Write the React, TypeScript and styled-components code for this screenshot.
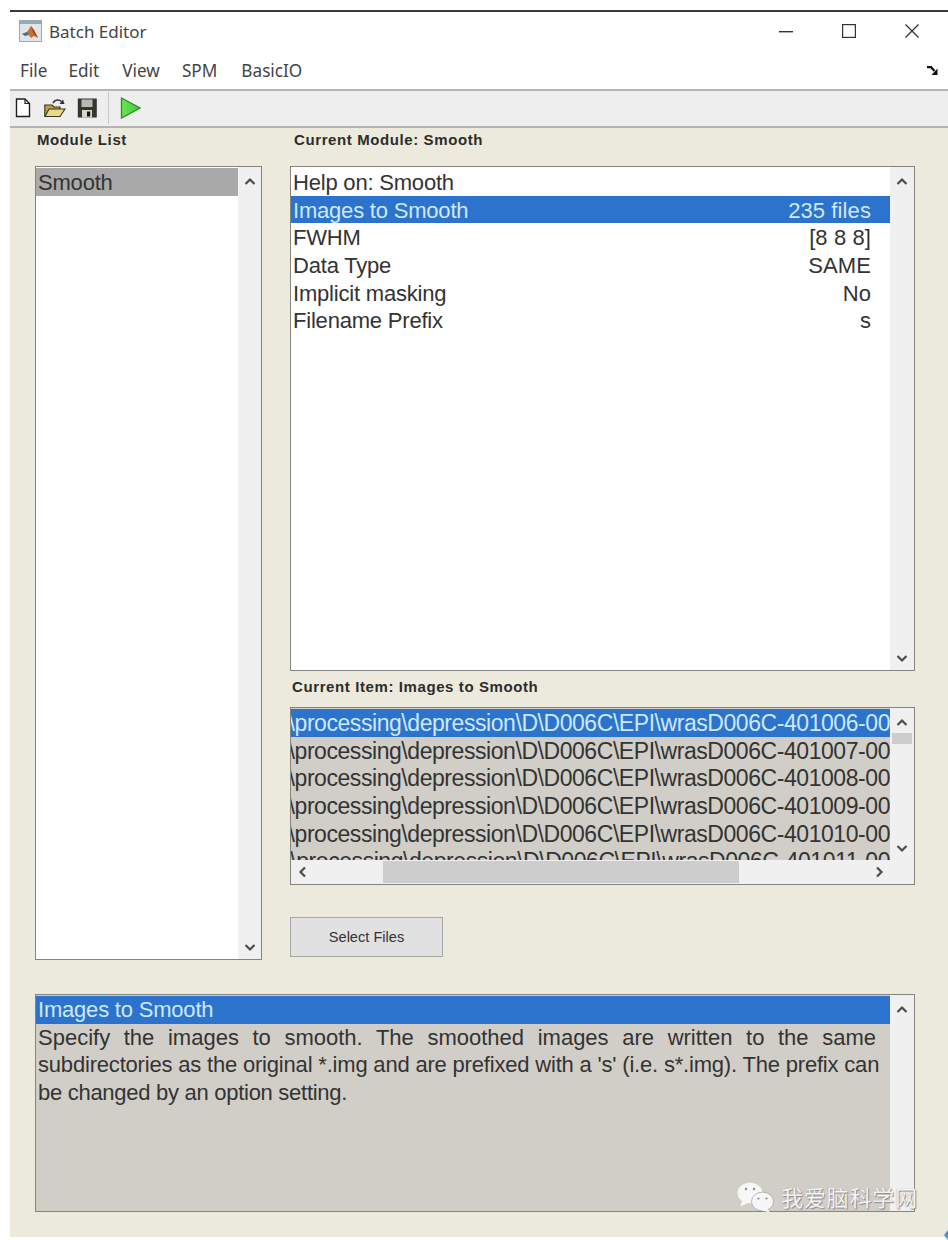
import React from 'react';
import styled, { createGlobalStyle } from 'styled-components';

const GlobalStyle = createGlobalStyle`
  html, body {
    margin: 0;
    padding: 0;
    background: #ffffff;
  }
  body {
    font-family: "Liberation Sans", Arial, sans-serif;
  }
  * {
    box-sizing: border-box;
  }
`;

const Page = styled.div`
  position: relative;
  width: 948px;
  height: 1240px;
  padding: 10px 0 3px 10px;
  overflow: hidden;
`;

const Window = styled.div`
  height: 100%;
  display: flex;
  flex-direction: column;
  border-top: 2px solid #3a3a3a;
  background: #ffffff;
`;

const TitleBar = styled.div`
  height: 38px;
  display: flex;
  align-items: center;
  flex: none;
  padding-left: 9px;
`;

const TitleText = styled.div`
  margin-left: 7px;
  font-family: "Noto Sans", sans-serif;
  font-size: 17px;
  color: #444444;
`;

const WindowButtons = styled.div`
  margin-left: auto;
  display: flex;
  align-items: center;
  gap: 49px;
  padding-right: 29px;
`;

const MenuBar = styled.div`
  height: 39px;
  flex: none;
  display: flex;
  align-items: center;
  padding: 1px 0 0 10px;
  gap: 22px;
`;

const MenuItem = styled.div<{ $nudge?: number }>`
  margin-left: ${p => p.$nudge ?? 0}px;
  font-family: "Noto Sans", sans-serif;
  font-size: 17.2px;
  color: #444444;
`;

const MenuArrow = styled.div`
  margin-left: auto;
  margin-right: 10px;
  display: flex;
  align-items: center;
`;

const ToolBar = styled.div`
  height: 39px;
  flex: none;
  display: flex;
  align-items: center;
  padding: 0 0 2px 5px;
  gap: 11px;
  background: #eeeeee;
  border-top: 2px solid #b4b4b4;
  border-bottom: 2px solid #b4b4b4;
`;

const ToolDivider = styled.div`
  width: 1px;
  height: 32px;
  background: #c8c8c8;
`;

const Content = styled.div`
  flex: 1;
  display: flex;
  flex-direction: column;
  background: #eceadd;
  padding: 0 33px 25px 25px;
`;

const Columns = styled.div`
  display: flex;
  gap: 28px;
`;

const LeftColumn = styled.div`
  width: 227px;
  flex: none;
  display: flex;
  flex-direction: column;
`;

const RightColumn = styled.div`
  flex: 1;
  min-width: 0;
  display: flex;
  flex-direction: column;
`;

const SectionLabel = styled.div<{ $height: number; $indent?: number; $top?: number }>`
  height: ${p => p.$height}px;
  padding-left: ${p => p.$indent ?? 2}px;
  padding-top: ${p => p.$top ?? 3}px;
  font-size: 15px;
  font-weight: 700;
  letter-spacing: 0.6px;
  line-height: 18px;
  color: #2c2c2c;
`;

const Panel = styled.div<{ $height: number }>`
  height: ${p => p.$height}px;
  display: flex;
  border: 1px solid #85857f;
  background: #ffffff;
  flex: none;
`;

const ListBody = styled.div<{ $grey?: boolean }>`
  flex: 1;
  min-width: 0;
  padding-top: 1px;
  overflow: hidden;
  background: ${p => (p.$grey ? '#d1cec7' : '#ffffff')};
`;

const Row = styled.div<{ $state?: 'active' | 'muted' }>`
  height: 27.7px;
  line-height: 27.7px;
  padding: 1px 19px 0 2px;
  display: flex;
  justify-content: space-between;
  white-space: nowrap;
  font-size: 22px;
  letter-spacing: -0.2px;
  color: ${p => (p.$state === 'active' ? '#cfe8ff' : '#333333')};
  background: ${p => (p.$state === 'active' ? '#2b73cc' : p.$state === 'muted' ? '#a9a9a9' : 'transparent')};
`;

const RowValue = styled.span`
  letter-spacing: 0.1px;
`;

const VScroll = styled.div<{ $width?: number }>`
  width: ${p => p.$width ?? 24}px;
  flex: none;
  display: flex;
  flex-direction: column;
  align-items: stretch;
  padding: 7px 0 4px;
  background: #f0f0f0;
`;

const ArrowSlot = styled.div`
  height: 16px;
  display: flex;
  align-items: center;
  justify-content: center;
  flex: none;
`;

const VThumb = styled.div`
  height: 11px;
  margin: 2px 2px 0;
  background: #cdcdcd;
`;

const VGap = styled.div`
  flex: 1;
`;

const FilesBox = styled.div`
  height: 178px;
  display: flex;
  flex-direction: column;
  border: 1px solid #85857f;
  background: #f0f0f0;
`;

const FilesTop = styled.div`
  flex: 1;
  min-height: 0;
  display: flex;
`;

const FileRow = styled.div<{ $active?: boolean }>`
  height: 27.7px;
  line-height: 27.7px;
  padding-top: 1px;
  display: flex;
  justify-content: flex-end;
  white-space: nowrap;
  overflow: hidden;
  font-size: 23px;
  letter-spacing: -0.44px;
  color: ${p => (p.$active ? '#cfe8ff' : '#333333')};
  background: ${p => (p.$active ? '#2b73cc' : 'transparent')};
`;

const HScroll = styled.div`
  height: 24px;
  flex: none;
  display: flex;
  align-items: center;
  padding: 0 29px 0 6px;
`;

const HThumb = styled.div`
  width: 356px;
  height: 22px;
  margin: 0 auto 0 74px;
  background: #cdcdcd;
`;

const SelectButton = styled.button`
  width: 153px;
  height: 40px;
  margin-top: 32px;
  padding: 0;
  border: 1px solid #a6a6a6;
  background: #e1e1e1;
  font-family: "Liberation Sans", Arial, sans-serif;
  font-size: 14.6px;
  color: #333333;
`;

const HelpPanel = styled(Panel)`
  margin-top: 34px;
`;

const HelpBody = styled.div`
  flex: 1;
  min-width: 0;
  padding-top: 1px;
  background: #d1cec7;
  font-size: 22px;
`;

const HelpLine = styled.div<{ $spread?: boolean; $tight?: number }>`
  height: 27.7px;
  line-height: 27.7px;
  width: 838px;
  margin-left: 2px;
  white-space: nowrap;
  color: #333333;
  letter-spacing: ${p => p.$tight ?? 0}px;
  ${p => p.$spread && 'white-space: normal; text-align: justify; text-align-last: justify;'}
`;

const HelpTitle = styled.div`
  height: 27.7px;
  line-height: 27.7px;
  padding-left: 2px;
  font-size: 22px;
  letter-spacing: -0.2px;
  color: #cfe8ff;
  background: #2b73cc;
`;

const Watermark = styled.div`
  position: absolute;
  left: 737px;
  top: 1182px;
  display: flex;
  align-items: flex-start;
  gap: 7px;
`;

const WatermarkText = styled.div`
  font-family: "Noto Sans CJK SC", sans-serif;
  font-size: 22px;
  letter-spacing: 0.8px;
  line-height: 28px;
  color: #f4f4f4;
  text-shadow: 1px 1px 1px #8a8a8a, 0 0 1px #9a9a9a;
`;

const CornerMark = styled.div`
  position: absolute;
  right: 0;
  bottom: 0;
  width: 0;
  height: 0;
  border-top: 5px solid transparent;
  border-bottom: 5px solid transparent;
  border-right: 4px solid #4a90d9;
`;

const Chevron: React.FC<{ dir: 'up' | 'down' | 'left' | 'right' }> = ({ dir }) => {
  const paths = {
    up: 'M1.5 8 L6 3.5 L10.5 8',
    down: 'M1.5 4 L6 8.5 L10.5 4',
    left: 'M8 1.5 L3.5 6 L8 10.5',
    right: 'M4 1.5 L8.5 6 L4 10.5',
  };
  return (
    <svg width="12" height="12" viewBox="0 0 12 12" fill="none">
      <path d={paths[dir]} stroke="#4c4c4c" strokeWidth="2.2" />
    </svg>
  );
};

const MatlabIcon = () => (
  <svg width="23" height="22" viewBox="0 0 23 22">
    <rect x="0.5" y="0.5" width="22" height="21" fill="#dfe6ea" stroke="#9aa8b2" />
    <rect x="1" y="1" width="21" height="3" fill="#97a9b6" />
    <path d="M3 14 L8 12 L12 6 L15 10 L19 18 L15 16 L12 18 L9 14 Z" fill="#c9703a" />
    <path d="M3 14 L8 12 L10 15 L6 16 Z" fill="#4a6f94" />
    <path d="M12 6 L15 10 L19 18 L14 13 Z" fill="#a8481f" />
  </svg>
);

const NewFileIcon = () => (
  <svg width="18" height="20" viewBox="0 0 18 20" fill="none">
    <path d="M1.5 1 H10 L14.5 5.5 V18.5 H1.5 Z" fill="#ffffff" stroke="#1f1f1f" strokeWidth="1.4" />
    <path d="M10 1 V5.5 H14.5" stroke="#1f1f1f" strokeWidth="1.2" />
  </svg>
);

const OpenIcon = () => (
  <svg width="22" height="20" viewBox="0 0 22 20" fill="none">
    <path d="M0.8 7 H8 L10 9 H16 V18 H0.8 Z" fill="#b9a24a" stroke="#3a3420" strokeWidth="1.1" />
    <path d="M1 18.5 L5 11 H21 L16 18.5 Z" fill="#ecd986" stroke="#3a3420" strokeWidth="1.1" />
    <path d="M9 5 C11 1.5 15 1.2 17.5 3.5" stroke="#333333" strokeWidth="1.6" />
    <path d="M15.5 6 L20.5 6 L19 1.5 Z" fill="#333333" />
  </svg>
);

const SaveIcon = () => (
  <svg width="20" height="20" viewBox="0 0 20 20">
    <rect x="0.8" y="0.5" width="19" height="19" fill="#36362c" />
    <rect x="4.5" y="1.5" width="11" height="7.5" fill="#b9bab4" />
    <rect x="5" y="12" width="10" height="7.5" fill="#d8d8d2" />
    <rect x="10" y="13.5" width="3.2" height="5" fill="#141414" />
  </svg>
);

const RunIcon = () => (
  <svg width="21" height="22" viewBox="0 0 21 22">
    <defs>
      <linearGradient id="runFill" x1="0" y1="0" x2="1" y2="0">
        <stop offset="0" stopColor="#6ce650" />
        <stop offset="1" stopColor="#3cc83a" />
      </linearGradient>
    </defs>
    <path d="M1.5 1 L20 11 L1.5 21 Z" fill="url(#runFill)" stroke="#2f8c2c" strokeWidth="1.3" />
  </svg>
);

const ResizeArrow = () => (
  <svg width="11" height="9" viewBox="0 0 11 9" fill="none">
    <path d="M0 1.2 L4 1.2 L7.5 5" stroke="#111111" strokeWidth="2.2" />
    <path d="M10.5 2.5 V9 H4.5 Z" fill="#111111" />
  </svg>
);

const MinimizeIcon = () => (
  <svg width="14" height="14" viewBox="0 0 14 14">
    <rect x="0" y="7" width="14" height="1.4" fill="#333333" />
  </svg>
);

const MaximizeIcon = () => (
  <svg width="14" height="14" viewBox="0 0 14 14" fill="none">
    <rect x="0.6" y="0.6" width="12.8" height="12.8" stroke="#333333" strokeWidth="1.2" />
  </svg>
);

const CloseIcon = () => (
  <svg width="14" height="14" viewBox="0 0 14 14" fill="none">
    <path d="M0.5 0.5 L13.5 13.5 M13.5 0.5 L0.5 13.5" stroke="#333333" strokeWidth="1.3" />
  </svg>
);

const WeChatIcon = () => (
  <svg width="37" height="31" viewBox="0 0 37 31">
    <ellipse cx="13" cy="11" rx="12.4" ry="10.2" fill="#f7f7f7" />
    <path d="M5 18 L3.5 24.5 L12 20.5 Z" fill="#f7f7f7" />
    <ellipse cx="25.5" cy="19.5" rx="11" ry="9.4" fill="#f7f7f7" stroke="#9c9c9c" strokeWidth="0.7" />
    <path d="M30 26.5 L33 30.5 L24.5 28.5 Z" fill="#f7f7f7" />
    <circle cx="9" cy="7" r="1.2" fill="#8a8a8a" />
    <circle cx="17" cy="7" r="1.2" fill="#8a8a8a" />
    <circle cx="21.5" cy="16.5" r="1.1" fill="#8a8a8a" />
    <circle cx="29.5" cy="16.5" r="1.1" fill="#8a8a8a" />
  </svg>
);

const Arrow: React.FC<{ dir: 'up' | 'down' }> = ({ dir }) => (
  <ArrowSlot>
    <Chevron dir={dir} />
  </ArrowSlot>
);

const moduleItems = [
  { label: 'Help on: Smooth', value: '' },
  { label: 'Images to Smooth', value: '235 files', active: true },
  { label: 'FWHM', value: '[8 8 8]' },
  { label: 'Data Type', value: 'SAME' },
  { label: 'Implicit masking', value: 'No' },
  { label: 'Filename Prefix', value: 's' },
];

const fileNumbers = ['401006', '401007', '401008', '401009', '401010', '401011'];

export default function App() {
  return (
    <>
      <GlobalStyle />
      <Page>
        <Window>
          <TitleBar>
            <MatlabIcon />
            <TitleText>Batch Editor</TitleText>
            <WindowButtons>
              <MinimizeIcon />
              <MaximizeIcon />
              <CloseIcon />
            </WindowButtons>
          </TitleBar>
          <MenuBar>
            <MenuItem>File</MenuItem>
            <MenuItem $nudge={-1}>Edit</MenuItem>
            <MenuItem $nudge={1}>View</MenuItem>
            <MenuItem>SPM</MenuItem>
            <MenuItem $nudge={2}>BasicIO</MenuItem>
            <MenuArrow>
              <ResizeArrow />
            </MenuArrow>
          </MenuBar>
          <ToolBar>
            <NewFileIcon />
            <OpenIcon />
            <SaveIcon />
            <ToolDivider />
            <RunIcon />
          </ToolBar>
          <Content>
            <Columns>
              <LeftColumn>
                <SectionLabel $height={38}>Module List</SectionLabel>
                <Panel $height={794}>
                  <ListBody>
                    <Row $state="muted">Smooth</Row>
                  </ListBody>
                  <VScroll $width={23}>
                    <Arrow dir="up" />
                    <VGap />
                    <Arrow dir="down" />
                  </VScroll>
                </Panel>
              </LeftColumn>
              <RightColumn>
                <SectionLabel $height={38} $indent={4}>Current Module: Smooth</SectionLabel>
                <Panel $height={505}>
                  <ListBody>
                    {moduleItems.map(item => (
                      <Row key={item.label} $state={item.active ? 'active' : undefined}>
                        <span>{item.label}</span>
                        <RowValue>{item.value}</RowValue>
                      </Row>
                    ))}
                  </ListBody>
                  <VScroll>
                    <Arrow dir="up" />
                    <VGap />
                    <Arrow dir="down" />
                  </VScroll>
                </Panel>
                <SectionLabel $height={36} $top={7}>Current Item: Images to Smooth</SectionLabel>
                <FilesBox>
                  <FilesTop>
                    <ListBody $grey>
                      {fileNumbers.map((num, index) => (
                        <FileRow key={num} $active={index === 0}>
                          {`data\\processing\\depression\\D\\D006C\\EPI\\wrasD006C-${num}-00`}
                        </FileRow>
                      ))}
                    </ListBody>
                    <VScroll>
                      <Arrow dir="up" />
                      <VThumb />
                      <VGap />
                      <Arrow dir="down" />
                    </VScroll>
                  </FilesTop>
                  <HScroll>
                    <Chevron dir="left" />
                    <HThumb />
                    <Chevron dir="right" />
                  </HScroll>
                </FilesBox>
                <SelectButton>Select Files</SelectButton>
              </RightColumn>
            </Columns>
            <HelpPanel $height={218}>
              <HelpBody>
                <HelpTitle>Images to Smooth</HelpTitle>
                <HelpLine $spread>
                  Specify the images to smooth. The smoothed images are written to the same
                </HelpLine>
                <HelpLine $tight={-0.19}>
                  subdirectories as the original *.img and are prefixed with a 's' (i.e. s*.img). The prefix can
                </HelpLine>
                <HelpLine $tight={-0.28}>be changed by an option setting.</HelpLine>
              </HelpBody>
              <VScroll>
                <Arrow dir="up" />
                <VGap />
              </VScroll>
            </HelpPanel>
          </Content>
        </Window>
        <Watermark>
          <WeChatIcon />
          <WatermarkText>我爱脑科学网</WatermarkText>
        </Watermark>
        <CornerMark />
      </Page>
    </>
  );
}
